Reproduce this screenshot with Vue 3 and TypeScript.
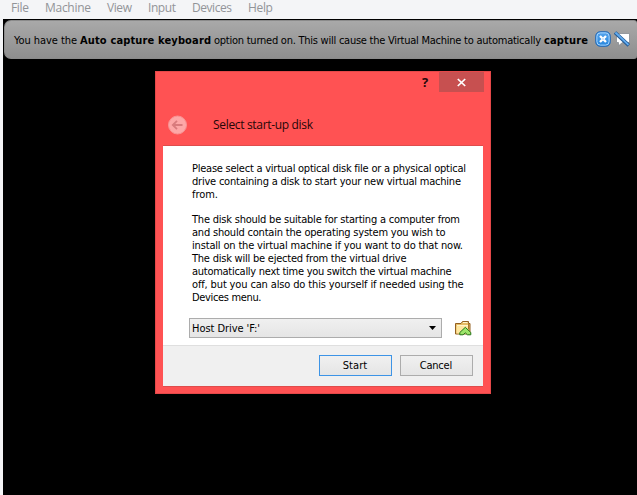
<script setup lang="ts">
import type { Directive } from 'vue'

interface Label {
  text: string
  width: number
  bold?: boolean
}

const menus: Label[] = [
  { text: 'File', width: 18 },
  { text: 'Machine', width: 46 },
  { text: 'View', width: 25 },
  { text: 'Input', width: 28 },
  { text: 'Devices', width: 40 },
  { text: 'Help', width: 25 },
]

const notice: Label[] = [
  { text: 'You have the', width: 63 },
  { text: 'Auto capture keyboard', width: 131, bold: true },
  { text: 'option turned on. This will cause the Virtual Machine to automatically', width: 327 },
  { text: 'capture', width: 44, bold: true },
]

const paragraphs: Label[][] = [
  [
    { text: 'Please select a virtual optical disk file or a physical optical', width: 274 },
    { text: 'drive containing a disk to start your new virtual machine', width: 269 },
    { text: 'from.', width: 26 },
  ],
  [
    { text: 'The disk should be suitable for starting a computer from', width: 268 },
    { text: 'and should contain the operating system you wish to', width: 253.5 },
    { text: 'install on the virtual machine if you want to do that now.', width: 271 },
    { text: 'The disk will be ejected from the virtual drive', width: 214.5 },
    { text: 'automatically next time you switch the virtual machine', width: 259.5 },
    { text: 'off, but you can also do this yourself if needed using the', width: 271.5 },
    { text: 'Devices menu.', width: 69.5 },
  ],
]

// Tracks a label so that it fills the given width exactly.
const vFit: Directive<HTMLElement, number> = {
  mounted(el, { value }) {
    const natural = el.getBoundingClientRect().width
    const count = (el.textContent ?? '').length
    if (count > 1) {
      const spacing = (value - natural) / (count - 1)
      el.style.letterSpacing = `${spacing}px`
      el.style.marginRight = `${-spacing}px`
    }
  },
}
</script>

<template>
  <div class="window">
    <nav class="menubar">
      <span v-for="m in menus" :key="m.text" v-fit="m.width" class="label">{{ m.text }}</span>
    </nav>
    <main class="screen">
      <div class="notice">
        <span v-for="n in notice" :key="n.text" v-fit="n.width" class="label" :class="{ bold: n.bold }">{{ n.text }}</span>
        <svg class="dismiss" width="16" height="16" viewBox="0 0 16 16">
          <defs>
            <linearGradient id="blue" x1="0" y1="0" x2="0" y2="1">
              <stop offset="0" stop-color="#58a5ec" />
              <stop offset="1" stop-color="#2585dc" />
            </linearGradient>
          </defs>
          <rect x="0.7" y="0.7" width="14.6" height="14.6" rx="4.5" fill="url(#blue)" stroke="#2468b4" />
          <rect x="1.9" y="1.9" width="12.2" height="12.2" rx="3.5" fill="none" stroke="#a6d5ff" />
          <path d="M5 5 11 11M11 5 5 11" stroke="#fff" stroke-width="2.3" />
          <rect x="7.5" y="7.5" width="1" height="1" fill="#4b94db" />
        </svg>
        <svg class="mute" width="17" height="16" viewBox="0 0 17 16">
          <path d="M2.5 2.5H15.5V11.5H8.5L4.5 14.8V11.5H2.5Z" fill="#fff" stroke="#858a90" stroke-width=".8" />
          <path d="M1 1.5 14.8 14.4" stroke="#245b96" stroke-width="3.6" />
          <path d="M1.4 1.5 14.5 13.8" stroke="#64adf0" stroke-width="1.8" />
        </svg>
      </div>

      <section class="dialog">
        <header class="titlebar">
          <span class="help">?</span>
          <span class="close">
            <svg width="9" height="9" viewBox="0 0 9 9"><path d="M.8 1 8.2 8M8.2 1 .8 8" stroke="#fff" stroke-width="1.7" /></svg>
          </span>
        </header>
        <div class="heading">
          <svg width="20" height="20" viewBox="0 0 20 20">
            <circle cx="10.5" cy="10" r="9" fill="#fda7a7" stroke="#f99292" />
            <path d="M15.5 10H6M10 5.8 5.8 10 10 14.2" fill="none" stroke="#d97b7d" stroke-width="1.8" />
          </svg>
          <span v-fit="100" class="label">Select start-up disk</span>
        </div>
        <div class="body">
          <div class="content">
            <p v-for="(p, i) in paragraphs" :key="i">
              <span v-for="l in p" :key="l.text" class="line"><span v-fit="l.width" class="label">{{ l.text }}</span></span>
            </p>
            <div class="picker">
              <div class="combo">
                <span v-fit="68" class="label">Host Drive 'F:'</span>
                <svg width="7" height="4" viewBox="0 0 7 4"><path d="M0 0H7L3.5 4Z" /></svg>
              </div>
              <svg width="17" height="16" viewBox="0 0 17 16">
                <path d="M.5 14V3.5H6L7.5 1.5H13.5V3.5H15V14Z" fill="#e6bc63" stroke="#936021" />
                <path d="M1.5 5.5H13V13.5H1.5Z" fill="#ffe7a0" />
                <path d="M8 2.5H12.5M2 5.5H13" stroke="#fff5cc" />
                <path d="M13.5 4V9" stroke="#a8752c" />
                <path d="M4.8 12.5 10.3 7.3 15.8 12.5V14.8H12.5L10.3 12.8 8.1 14.8H4.8Z" fill="#9de56a" stroke="#26761b" />
              </svg>
            </div>
          </div>
          <footer>
            <button class="primary"><span v-fit="24.5" class="label">Start</span></button>
            <button><span v-fit="32.5" class="label">Cancel</span></button>
          </footer>
        </div>
      </section>
    </main>
  </div>
</template>

<style>
body { margin: 0; overflow: hidden; }
</style>

<style scoped>
* { box-sizing: border-box; }
.window {
  width: 637px;
  height: 495px;
  overflow: hidden;
  background: #f4f5f7;
  color: #000;
  font: 11px/13px "DejaVu Sans Condensed", "DejaVu Sans", sans-serif;
  font-stretch: condensed;
}
.label { display: inline-block; flex: none; white-space: pre; }
.bold { font-weight: bold; }
.menubar {
  display: flex;
  height: 19px;
  padding: 0 0 0 11px;
  gap: 16px;
  color: #929498;
  font: 12px/16px "Open Sans", sans-serif;
}
.screen {
  height: 476px;
  margin-left: 3px;
  padding-top: 1px;
  background: #000;
  border-left: 1px solid #000;
}
.notice {
  display: flex;
  align-items: center;
  gap: 3px;
  height: 39px;
  padding: 2px 0 0 9px;
  border: 1px solid #8b8b8b;
  border-right: 0;
  border-radius: 7px 3px 3px 7px;
  background: linear-gradient(#a9a9a9, #8e8e8e);
}
.notice .dismiss { flex: none; margin: -4px 0 0 4px; }
.notice .mute { flex: none; margin-top: -4px; }
.dialog {
  width: 336px;
  height: 323px;
  margin: 12px 0 0 151px;
  padding: 0 7px 7px;
  border: 1px solid #e54849;
  background: #ff5253;
}
.titlebar { display: flex; justify-content: flex-end; height: 43px; margin-right: -1px; }
.help { width: 8px; margin-right: 9px; font: bold 13px/21px "Open Sans", sans-serif; color: #25080a; }
.close { display: flex; align-items: center; justify-content: center; width: 45px; height: 20px; background: #c75050; }
.heading {
  display: flex;
  align-items: center;
  height: 20px;
  margin-bottom: 10px;
  padding-left: 4px;
  gap: 26px;
  font: 12px/20px "Open Sans", sans-serif;
  color: #260708;
}
.body { width: 320px; height: 242px; background: #f0f0f0; border: 1px solid #df4c4c; border-width: 1px 0; }
.content { height: 200px; padding: 16px 0 0 29px; background: #fff; border-bottom: 1px solid #dfdfdf; }
p { margin: 0 0 12px; }
.line { display: block; height: 13px; }
.picker { display: flex; align-items: center; gap: 13px; margin: 14px 0 0 -3px; }
.combo {
  display: flex;
  align-items: center;
  justify-content: space-between;
  width: 253px;
  height: 20px;
  padding: 0 5px 0 2px;
  border: 1px solid #acacac;
  background: linear-gradient(#f0f0f0, #e5e5e5);
}
footer { display: flex; justify-content: flex-end; gap: 8px; padding: 9px 10px 0 0; }
button {
  width: 73px;
  height: 21px;
  padding: 0 1px 0 0;
  border: 1px solid #acacac;
  background: linear-gradient(#f0f0f0, #e5e5e5);
  color: #000;
  font: inherit;
}
button.primary { border: 1px solid #3d94e6; }
</style>
